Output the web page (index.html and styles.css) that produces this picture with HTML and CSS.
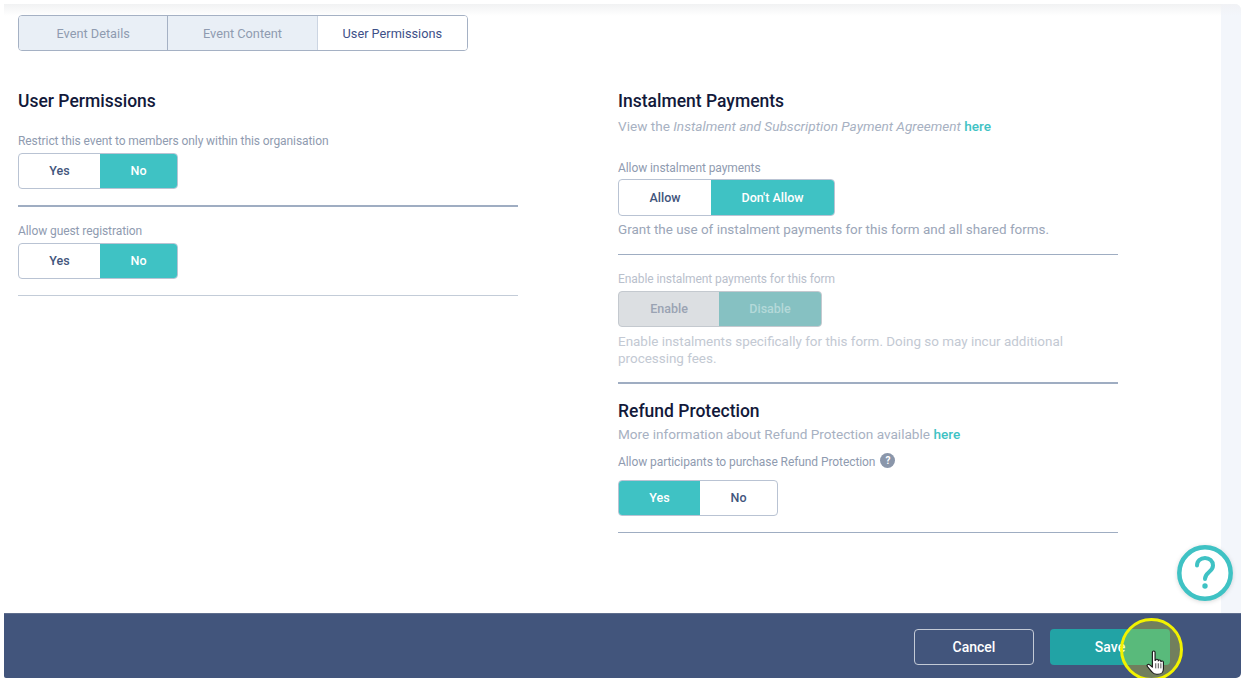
FILE: index.html
```html
<!DOCTYPE html>
<html lang="en">
<head>
<meta charset="UTF-8">
<meta name="viewport" content="width=device-width, initial-scale=1.0">
<title>User Permissions</title>
<link rel="stylesheet" href="styles.css">
</head>
<body>
<div class="app">
    <div class="main">
        <div class="content">
            <div class="tabs">
                <a class="tab">Event Details</a>
                <a class="tab">Event Content</a>
                <a class="tab tab-active">User Permissions</a>
            </div>
            <div class="columns">
                <div class="column">
                    <h2 class="title">User Permissions</h2>
                    <div class="label label-first">Restrict this event to members only within this organisation</div>
                    <div class="toggle toggle-yesno">
                        <span class="opt">Yes</span>
                        <span class="opt opt-on">No</span>
                    </div>
                    <hr class="rule rule-thick rule-a">
                    <div class="label label-guest">Allow guest registration</div>
                    <div class="toggle toggle-yesno">
                        <span class="opt">Yes</span>
                        <span class="opt opt-on">No</span>
                    </div>
                    <hr class="rule rule-light rule-a">
                </div>
                <div class="column">
                    <h2 class="title">Instalment Payments</h2>
                    <p class="sub sub-first">View the <em>Instalment and Subscription Payment Agreement</em> <a class="link">here</a></p>
                    <div class="label label-allow">Allow instalment payments</div>
                    <div class="toggle toggle-allow">
                        <span class="opt">Allow</span>
                        <span class="opt opt-on">Don't Allow</span>
                    </div>
                    <p class="help">Grant the use of instalment payments for this form and all shared forms.</p>
                    <hr class="rule rule-b">
                    <div class="label label-off label-enable">Enable instalment payments for this form</div>
                    <div class="toggle toggle-enable toggle-off">
                        <span class="opt">Enable</span>
                        <span class="opt opt-on">Disable</span>
                    </div>
                    <p class="help help-off">Enable instalments specifically for this form. Doing so may incur additional processing fees.</p>
                    <hr class="rule rule-b">
                    <h2 class="title title-refund">Refund Protection</h2>
                    <p class="sub sub-refund">More information about Refund Protection available <a class="link">here</a></p>
                    <div class="label label-refund">Allow participants to purchase Refund Protection <span class="tip">?</span></div>
                    <div class="toggle toggle-yesno">
                        <span class="opt opt-on">Yes</span>
                        <span class="opt">No</span>
                    </div>
                    <hr class="rule rule-a">
                </div>
            </div>
        </div>
        <div class="strip"></div>
        <svg class="help-bubble" width="58" height="58" viewBox="0 0 58 58">
            <circle cx="29" cy="29" r="25.700" fill="#fff" stroke="#3fc2c4" stroke-width="4.500"/>
            <path d="M21 21.500c0-4.500 3.600-7.500 8-7.500s8 3 8 7.500c0 6.500-8 6.500-8 13.500" fill="none" stroke="#3fc2c4" stroke-width="4" stroke-linecap="round"/>
            <circle cx="29" cy="42" r="2.700" fill="#3fc2c4"/>
        </svg>
    </div>
    <div class="footer">
        <button class="btn btn-cancel">Cancel</button>
        <button class="btn btn-save">Save</button>
        <div class="cursor-ring"></div>
        <svg class="cursor-hand" width="18" height="25" viewBox="0 0 15.500 24.500" preserveAspectRatio="none">
            <path d="M5.500 2.200c0-1.500 2.300-1.500 2.300 0v8l.6-.1c0-1.500 2.200-1.400 2.200 0v.6c.2-1.400 2.200-1.300 2.200.1v.8c.3-1.200 2.200-1.100 2.200.3v6.600c0 2.800-1.700 5.300-4.700 5.300H9c-2 0-3-.9-4-2.400l-3.800-5.300c-.9-1.300.8-2.700 2-1.500l2.300 2.300z" fill="#fff" stroke="#1c1c1c" stroke-width="1" stroke-linejoin="round"/>
            <path d="M8.400 13v5M10.600 13v5M12.800 13v5" stroke="#1c1c1c" stroke-width=".7"/>
        </svg>
    </div>
</div>
</body>
</html>
```

FILE: styles.css
```css
* {
    box-sizing: border-box;
}
body {
    margin: 0;
    background: #fff;
    font-family: Roboto, "Liberation Sans", sans-serif;
    color: #42557c;
}
.app {
    margin: 4px;
    height: 674px;
    display: flex;
    flex-direction: column;
    border-radius: 0 6px 5px 2px;
    overflow: hidden;
}
.main {
    flex: 1;
    display: flex;
    position: relative;
    background: linear-gradient(#f1f2f3, #fff 12px);
}
.content {
    flex: 1;
    padding: 11px 0 0 14px;
}
.strip {
    width: 20px;
    background: linear-gradient(#f1f2f5, #f3f6fb 12px);
}

/* tabs */
.tabs {
    display: flex;
    width: 450px;
    height: 36px;
    border: 1px solid #a5b1c4;
    border-radius: 4px;
    overflow: hidden;
}
.tab {
    width: 150px;
    display: flex;
    align-items: center;
    justify-content: center;
    background: #e9eff6;
    color: #8f9bb0;
    font-size: 12.750px;
    border-right: 1px solid #a5b1c4;
}
.tab:nth-child(2) {
    border-right-color: #ccd5e2;
}
.tab-active {
    background: #fff;
    color: #3e5088;
    border-right: 0;
}

.columns {
    display: grid;
    grid-template-columns: 500px 500px;
    gap: 100px;
    margin-top: 39px;
}
.title {
    margin: 0;
    font-size: 17.500px;
    line-height: 22px;
    font-weight: 500;
    color: #12193a;
}
.title-refund {
    margin-top: 16px;
}
.label {
    font-size: 12px;
    line-height: 16px;
    letter-spacing: -0.08px;
    color: #8f9bb0;
}
.label-first {
    margin-top: 21px;
}
.label-guest {
    margin-top: 16px;
}
.label-allow {
    margin-top: 25px;
}
.label-enable {
    margin-top: 16px;
}
.label-refund {
    margin-top: 11px;
    margin-bottom: 10px;
    display: flex;
    align-items: center;
    gap: 5px;
    height: 16px;
}
.label-off {
    color: #b9c0cc;
}
.sub {
    margin: 0;
    font-size: 13.600px;
    line-height: 18px;
    color: #a7b1c2;
}
.sub-first {
    margin-top: 5px;
}
.sub-refund {
    margin-top: 3px;
}
.link {
    color: #3fc2c4;
    font-weight: 500;
}
.tip {
    width: 15px;
    height: 15px;
    margin-top: -4px;
    border-radius: 50%;
    background: #8a96aa;
    color: #fff;
    font-size: 10px;
    font-weight: 700;
    line-height: 15px;
    text-align: center;
}
.help {
    margin: 5px 0 0;
    font-size: 13.450px;
    line-height: 17px;
    color: #9ba6b8;
}
.help-off {
    color: #c3c9d3;
    width: 470px;
    margin-top: 6px;
}

/* toggles */
.toggle {
    display: flex;
    height: 36px;
    margin-top: 4px;
    border: 1px solid #b9c3d3;
    border-radius: 4px;
    overflow: hidden;
    background: #fff;
}
.opt {
    display: flex;
    align-items: center;
    justify-content: center;
    padding-bottom: 1px;
    font-size: 12.500px;
    font-weight: 500;
    color: #42557c;
}
.opt-on {
    background: #3fc2c4;
    color: #fff;
}
.toggle-yesno {
    width: 160px;
}
.toggle-yesno .opt:first-child {
    width: 81px;
}
.toggle-yesno .opt:last-child {
    flex: 1;
}
.toggle-allow {
    width: 217px;
    height: 37px;
    margin-top: 3px;
}
.toggle-allow .opt:first-child {
    width: 92px;
}
.toggle-allow .opt-on {
    flex: 1;
}
.toggle-enable {
    width: 204px;
}
.toggle-enable .opt:first-child {
    width: 100px;
}
.toggle-enable .opt-on {
    flex: 1;
}
.toggle-off {
    border-color: #c4c9cf;
    background: #dcdfe2;
}
.toggle-off .opt {
    color: #9aa3b3;
}
.toggle-off .opt-on {
    background: #86c1c2;
    color: #b4d9d9;
}

.rule {
    border: 0;
    height: 1px;
    margin: 16px 0 0;
    background: #9fadc2;
}
.rule-thick {
    height: 2px;
}
.rule-light {
    background: #c3ccd8;
}
.rule-b {
    margin-top: 16px;
}
.help-off + .rule-b {
    margin-top: 15px;
    height: 2px;
}

/* footer */
.footer {
    position: relative;
    height: 65px;
    flex-shrink: 0;
    display: flex;
    justify-content: flex-end;
    align-items: center;
    gap: 16px;
    padding: 1px 71px 0 0;
    background: #42557c;
    border-top: 1px solid #5f6e8d;
}
.btn {
    height: 36px;
    border-radius: 4px;
    font-family: inherit;
    font-size: 14px;
    font-weight: 500;
    color: #fff;
}
.btn-cancel {
    width: 120px;
    border: 1px solid #c3cad6;
    background: transparent;
}
.btn-save {
    width: 120px;
    border: 0;
    background: #22a3a5;
}

/* overlays */
.help-bubble {
    position: absolute;
    right: 7px;
    bottom: 11px;
    filter: drop-shadow(0 1px 2px rgba(0, 0, 0, 0.15));
}
.cursor-ring {
    position: absolute;
    left: 1116px;
    top: 4px;
    width: 63px;
    height: 63px;
    border: 3px solid #f2f200;
    border-radius: 50%;
    background: rgba(255, 255, 0, 0.25);
}
.cursor-hand {
    position: absolute;
    left: 1142px;
    top: 36px;
}
```
